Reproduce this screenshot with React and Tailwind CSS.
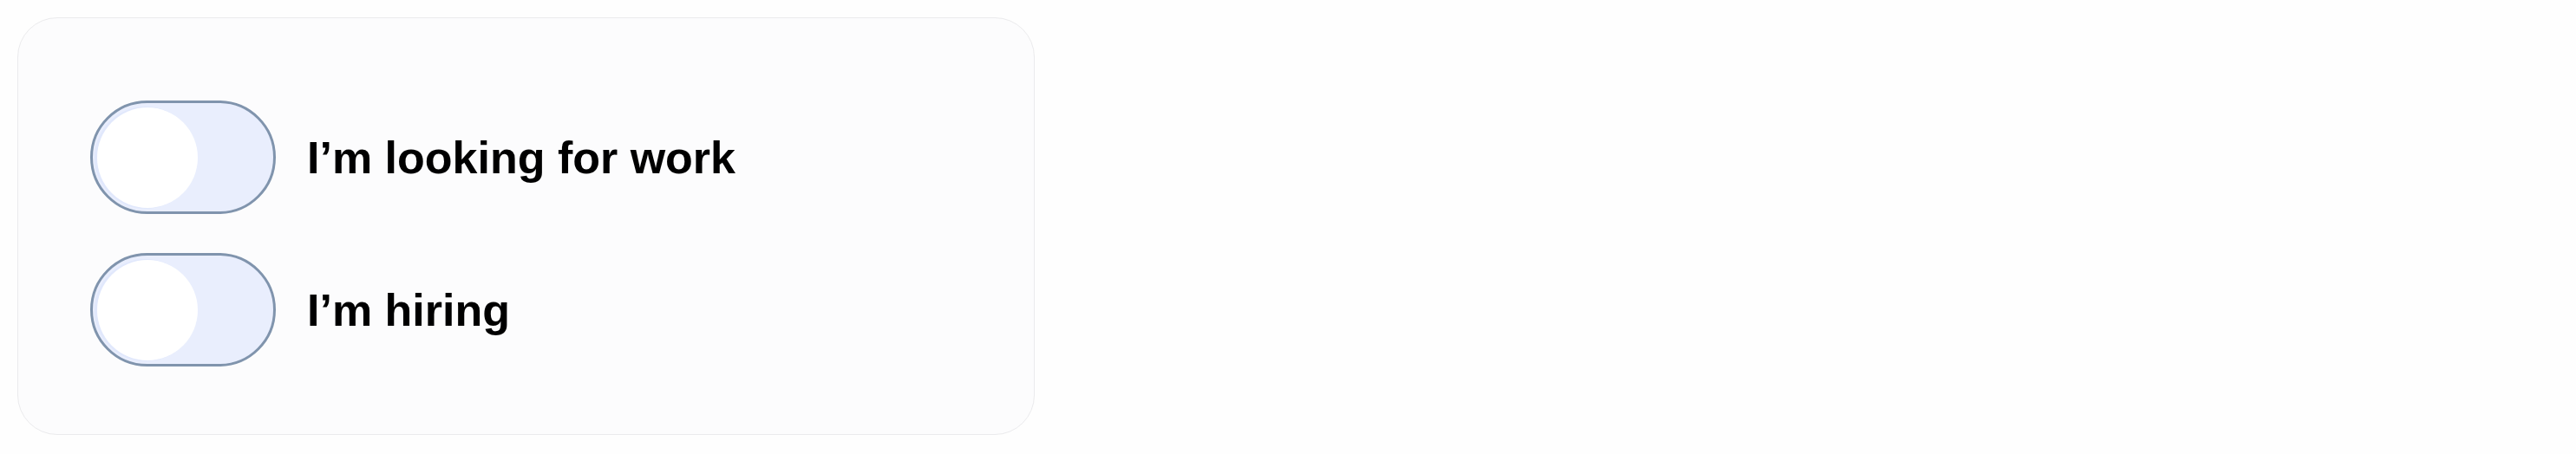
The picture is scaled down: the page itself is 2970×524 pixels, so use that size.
import { useState } from 'react'

function Toggle({ on, onChange }) {
  return (
    <button
      type="button"
      role="switch"
      aria-checked={on}
      onClick={() => onChange(!on)}
      className={`flex h-[131px] w-[214px] shrink-0 items-center rounded-full border-[3px] border-[#8094ad] bg-[#e9eefd] px-[5px] ${on ? 'justify-end' : 'justify-start'}`}
    >
      <span className="block h-[116px] w-[116px] rounded-full bg-white shadow-[-2px_0_0_1px_#e1e8fc]" />
    </button>
  )
}

export default function App() {
  const [seeking, setSeeking] = useState(false)
  const [hiring, setHiring]   = useState(false)

  const rows = [
    { label: 'I’m looking for work', on: seeking, set: setSeeking },
    { label: 'I’m hiring',           on: hiring,  set: setHiring },
  ]

  return (
    <div className="min-h-screen bg-[#fefefe] pl-[20px] pt-[20px]" style={{ fontFamily: '"Liberation Sans", Arial, sans-serif' }}>
      <div className="flex h-[482px] w-[1173px] flex-col gap-[45px] rounded-[46px] border border-[#ebebed] bg-[#fcfcfd] pl-[83px] pt-[95px]">
        {rows.map(r => (
          <label key={r.label} className="flex items-center gap-[36px]">
            <Toggle on={r.on} onChange={r.set} />
            <span className="text-[52px] font-bold leading-none text-black">{r.label}</span>
          </label>
        ))}
      </div>
    </div>
  )
}
